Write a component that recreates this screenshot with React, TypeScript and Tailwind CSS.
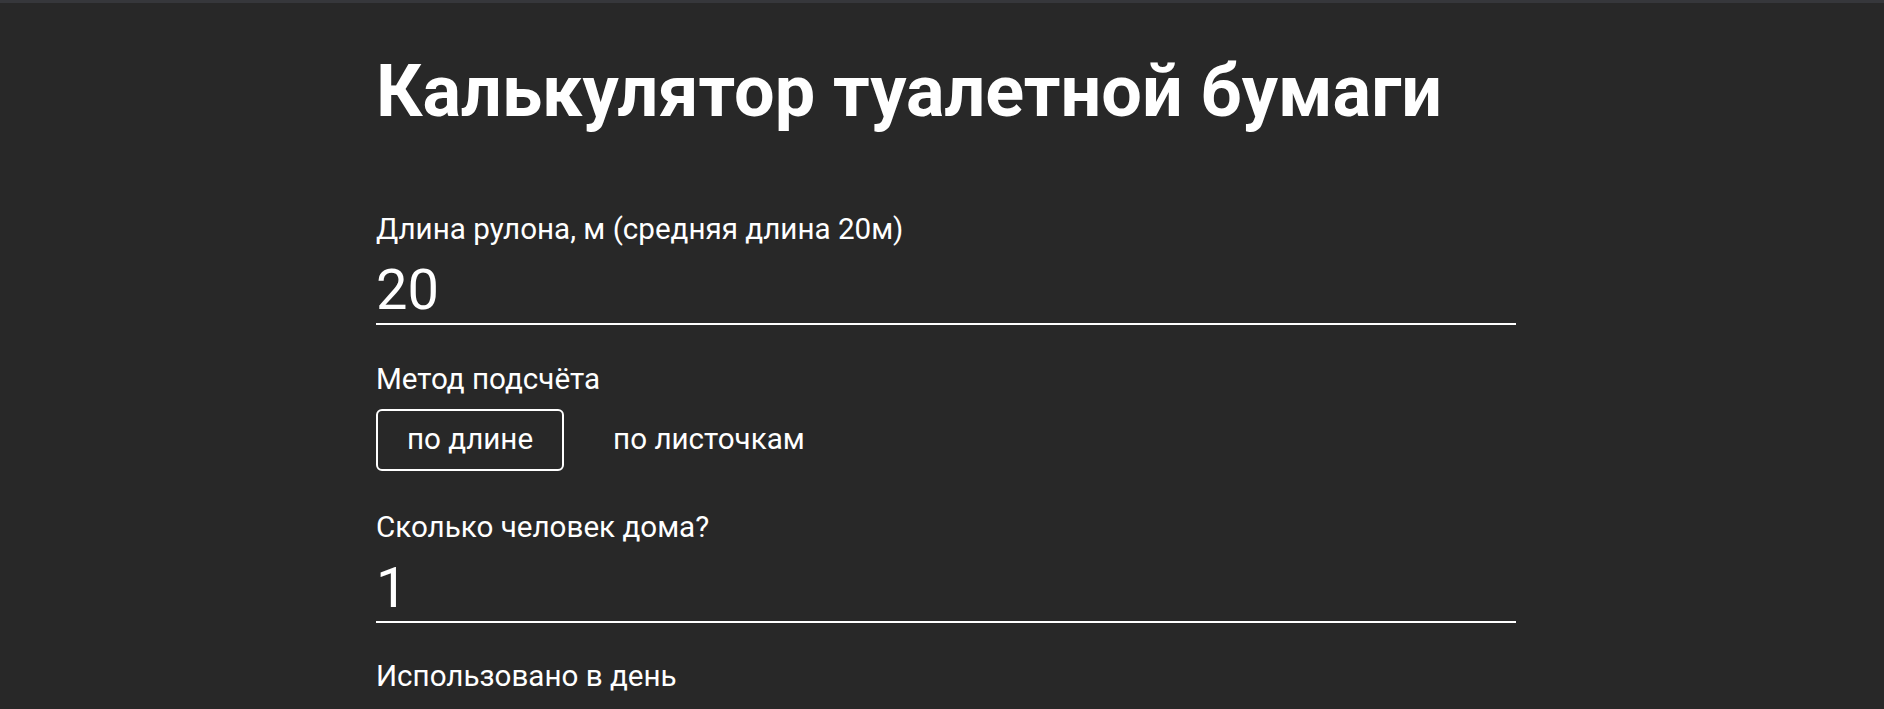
import React, { useState } from "react";

type Method = "length" | "sheets";

function Field({
  label,
  value,
  onChange,
  autoFocus,
}: {
  label: string;
  value: string;
  onChange: (v: string) => void;
  autoFocus?: boolean;
}) {
  return (
    <div className="flex flex-col">
      <label className="text-[29.6px] leading-[30px]">{label}</label>
      <input
        type="text"
        value={value}
        autoFocus={autoFocus}
        onChange={(e) => onChange(e.target.value)}
        className="mt-[18px] h-[63px] w-full border-b-2 border-white bg-transparent p-0 pb-[5px] text-[56px] leading-none text-white caret-white outline-none"
      />
    </div>
  );
}

export default function App() {
  const [rollLength, setRollLength] = useState("20");
  const [people, setPeople] = useState("1");
  const [method, setMethod] = useState<Method>("length");

  return (
    <div
      className="min-h-screen bg-[#282828] text-white"
      style={{ fontFamily: "Roboto, 'Noto Sans', sans-serif" }}
    >
      {/* top strip */}
      <div className="h-[3px] bg-[#36373b]" />

      <div className="flex justify-center pl-[8px]">
        <div className="flex w-[1140px] flex-col">
          <h1 className="mt-[53px] text-[72px] font-bold leading-none">
            Калькулятор туалетной бумаги
          </h1>

          <div className="mt-[86px]">
            <Field
              label="Длина рулона, м (средняя длина 20м)"
              value={rollLength}
              onChange={setRollLength}
            />
          </div>

          <div className="mt-[39px] text-[29.6px] leading-[30px]">Метод подсчёта</div>
          <div className="mt-[15px] flex gap-[18px]">
            <button
              onClick={() => setMethod("length")}
              className={`h-[62px] rounded-[6px] border-2 px-[29px] text-[29.6px] leading-none text-white ${
                method === "length" ? "border-white" : "border-transparent"
              }`}
            >
              по длине
            </button>
            <button
              onClick={() => setMethod("sheets")}
              className={`h-[62px] rounded-[6px] border-2 px-[29px] text-[29.6px] leading-none text-white ${
                method === "sheets" ? "border-white" : "border-transparent"
              }`}
            >
              по листочкам
            </button>
          </div>

          <div className="mt-[41px]">
            <Field
              label="Сколько человек дома?"
              value={people}
              onChange={setPeople}
              autoFocus
            />
          </div>

          <div className="mt-[38px] text-[29.6px] leading-[30px]">Использовано в день</div>
        </div>
      </div>
    </div>
  );
}
